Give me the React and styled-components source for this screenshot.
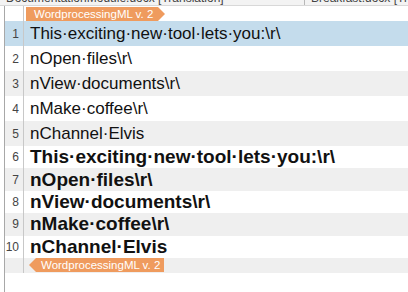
import React from "react";
import styled, { createGlobalStyle } from "styled-components";

const Global = createGlobalStyle`
  html, body { margin: 0; padding: 0; background: #fff; }
  body { font-family: "Liberation Sans", Arial, sans-serif; width: 408px; height: 292px; overflow: hidden; }
`;

const TabStrip = styled.div`
  height: 5px;
  overflow: hidden;
  display: flex;
  background: #f3f3f3;
  border-bottom: 1px solid #d8d8d8;
`;

const Tab = styled.div`
  flex: ${(p) => (p.grow ? 1 : "none")};
  width: ${(p) => p.w || "auto"};
  border-right: 1px solid #b8b8b8;
  font-size: 12px;
  line-height: 12px;
  margin-top: -8px;
  padding-left: 6px;
  color: #444;
  white-space: nowrap;
`;

const Editor = styled.div`
  margin-left: 4px;
  border-left: 1px solid #a8a8a8;
  height: 286px;
`;

const Row = styled.div`
  display: grid;
  grid-template-columns: 19px 1fr;
  height: ${(p) => p.h}px;
  background: ${(p) => p.bg};
`;

const Gutter = styled.div`
  border-right: 1px solid #c8c8c8;
  font-size: 12px;
  color: #444;
  padding-right: 4px;
  display: flex;
  align-items: center;
  justify-content: flex-end;
`;

const Text = styled.div`
  padding-left: 6px;
  display: flex;
  align-items: center;
  font-size: ${(p) => (p.bold ? 19 : 17)}px;
  font-weight: ${(p) => (p.bold ? 700 : 400)};
  color: #111;
  white-space: nowrap;
`;

const TagCell = styled.div`
  display: flex;
  align-items: center;
  padding-left: ${(p) => p.pl}px;
`;

const Tag = styled.div`
  position: relative;
  height: 14px;
  background: #ef9b5e;
  color: #fff;
  font-size: 11.5px;
  line-height: 14px;
  padding: ${(p) => (p.left ? "0 4px 0 5px" : "0 5px 0 8px")};
  white-space: nowrap;
  &::after {
    content: "";
    position: absolute;
    top: 0;
    ${(p) => (p.left ? "right: 100%;" : "left: 100%;")}
    border-top: 7px solid transparent;
    border-bottom: 7px solid transparent;
    ${(p) =>
      p.left
        ? "border-right: 7px solid #ef9b5e;"
        : "border-left: 7px solid #ef9b5e;"}
  }
`;

const lines = [
  "This·exciting·new·tool·lets·you:\\r\\",
  "nOpen·files\\r\\",
  "nView·documents\\r\\",
  "nMake·coffee\\r\\",
  "nChannel·Elvis",
];

export default function App() {
  const rows = [
    ...lines.map((t) => ({ t, bold: false, h: 25 })),
    ...lines.map((t) => ({ t, bold: true, h: 22.4 })),
  ];
  return (
    <>
      <Global />
      <TabStrip>
        <Tab w="298px">DocumentationModule.docx [Translation]</Tab>
        <Tab grow>Breakfast.docx [Translation]</Tab>
      </TabStrip>
      <Editor>
        <Row h={15} bg="#fff">
          <Gutter />
          <TagCell pl={2}>
            <Tag>WordprocessingML v. 2</Tag>
          </TagCell>
        </Row>
        {rows.map((r, i) => (
          <Row
            key={i}
            h={r.h}
            bg={i === 0 ? "#c4dcec" : i % 2 === 0 ? "#efefef" : "#fff"}
          >
            <Gutter>{i + 1}</Gutter>
            <Text bold={r.bold}>{r.t}</Text>
          </Row>
        ))}
        <Row h={15} bg="#efefef">
          <Gutter />
          <TagCell pl={12}>
            <Tag left>WordprocessingML v. 2</Tag>
          </TagCell>
        </Row>
      </Editor>
    </>
  );
}
